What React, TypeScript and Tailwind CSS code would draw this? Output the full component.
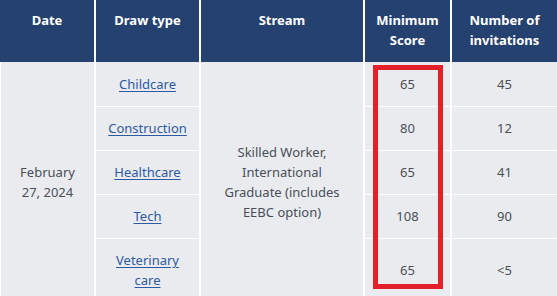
import c from "clsx"

type Row = {
  type: string
  score: string
  count: string
}

const rows: Row[] = [
  { type: "Childcare", score: "65", count: "45" },
  { type: "Construction", score: "80", count: "12" },
  { type: "Healthcare", score: "65", count: "41" },
  { type: "Tech", score: "108", count: "90" },
  { type: "Veterinary care", score: "65", count: "<5" },
]

const th = "bg-[#25416f] text-white font-bold text-[13px] leading-[20px] text-center align-top pt-[10px] pb-[12px] px-2"
const td = "text-[13px] leading-[20px] text-center align-middle px-3 text-[#4a4f57]"

export default function App() {
  return (
    <div className="relative w-[557px] h-[296px] overflow-hidden bg-white" style={{ fontFamily: '"Noto Sans", "Open Sans", sans-serif' }}>
      <table className="table-fixed w-[557px] border-separate border-spacing-0 bg-[#e9ebef]">
        <thead>
          <tr>
            <th className={c(th, "w-[94px]")}>Date</th>
            <th className={c(th, "w-[105px] border-l-2 border-white")}>Draw type</th>
            <th className={c(th, "w-[164px] border-l-2 border-white")}>Stream</th>
            <th className={c(th, "w-[87px] border-l-2 border-white")}>Minimum Score</th>
            <th className={c(th, "w-[107px] border-l-2 border-white")}>Number of invitations</th>
          </tr>
        </thead>
        <tbody>
          {rows.map((r, i) => {
            const pad = i === 0 ? "py-[12px]" : "pt-[11px] pb-[12px] border-t border-white"
            return (
              <tr key={r.type}>
                {i === 0 && (
                  <td rowSpan={5} className={c(td, "px-2 border-l border-white")}>
                    February 27, 2024
                  </td>
                )}
                <td className={c(td, pad, "border-l-2 border-white")}>
                  <a href="#" className="text-[#2d5aa0] underline underline-offset-2">{r.type}</a>
                </td>
                {i === 0 && (
                  <td rowSpan={5} className={c(td, "px-5 border-l-2 border-white")}>
                    Skilled Worker, International Graduate (includes EEBC option)
                  </td>
                )}
                <td className={c(td, pad, "border-l-2 border-white")}>{r.score}</td>
                <td className={c(td, pad, "border-l-2 border-white")}>{r.count}</td>
              </tr>
            )
          })}
        </tbody>
      </table>
      <div className="absolute left-[373px] top-[65px] w-[70px] h-[224px] border-[5px] border-[#e3202a]" />
    </div>
  )
}
